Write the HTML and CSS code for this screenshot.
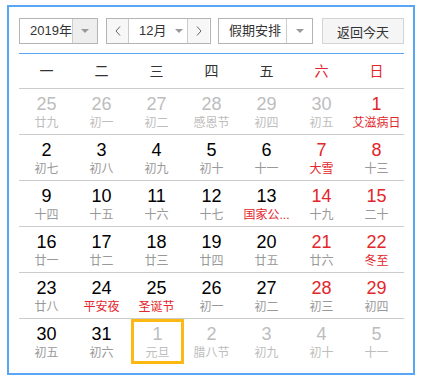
FILE: index.html
```html
<!DOCTYPE html>
<html>
  <head>
    <title>万年历</title>
    <link rel="stylesheet" href="styles.css">
  </head>
  <body>
    <div class="calendar">
      <div class="toolbar">
        <div class="select year-select">
          <span class="select-text">2019年</span>
          <span class="select-arrow gray"><i class="caret"></i></span>
        </div>

        <div class="month-group">
          <span class="nav-btn">
            <svg width="6" height="10" viewBox="0 0 6 10"><polyline points="5,0.5 1,5 5,9.5" fill="none" stroke="#666" stroke-width="1"/></svg>
          </span>
          <span class="month-text">12月 <i class="caret"></i></span>
          <span class="nav-btn">
            <svg width="6" height="10" viewBox="0 0 6 10"><polyline points="1,0.5 5,5 1,9.5" fill="none" stroke="#666" stroke-width="1"/></svg>
          </span>
        </div>

        <div class="select holiday-select">
          <span class="select-text">假期安排</span>
          <span class="select-arrow"><i class="caret"></i></span>
        </div>

        <button class="today-btn">返回今天</button>
      </div>

      <div class="weekdays">
        <span>一</span><span>二</span><span>三</span><span>四</span><span>五</span>
        <span class="weekend">六</span><span class="weekend">日</span>
      </div>

      <!-- rows of days, other = not in this month -->
      <div class="week">
        <div class="day other"><b>25</b><em>廿九</em></div>
        <div class="day other"><b>26</b><em>初一</em></div>
        <div class="day other"><b>27</b><em>初二</em></div>
        <div class="day other"><b>28</b><em>感恩节</em></div>
        <div class="day other"><b>29</b><em>初四</em></div>
        <div class="day other"><b>30</b><em>初五</em></div>
        <div class="day weekend"><b>1</b><em class="fest">艾滋病日</em></div>
      </div>
      <div class="week">
        <div class="day"><b>2</b><em>初七</em></div>
        <div class="day"><b>3</b><em>初八</em></div>
        <div class="day"><b>4</b><em>初九</em></div>
        <div class="day"><b>5</b><em>初十</em></div>
        <div class="day"><b>6</b><em>十一</em></div>
        <div class="day weekend"><b>7</b><em class="fest">大雪</em></div>
        <div class="day weekend"><b>8</b><em>十三</em></div>
      </div>
      <div class="week">
        <div class="day"><b>9</b><em>十四</em></div>
        <div class="day"><b>10</b><em>十五</em></div>
        <div class="day"><b>11</b><em>十六</em></div>
        <div class="day"><b>12</b><em>十七</em></div>
        <div class="day"><b>13</b><em class="fest">国家公...</em></div>
        <div class="day weekend"><b>14</b><em>十九</em></div>
        <div class="day weekend"><b>15</b><em>二十</em></div>
      </div>
      <div class="week">
        <div class="day"><b>16</b><em>廿一</em></div>
        <div class="day"><b>17</b><em>廿二</em></div>
        <div class="day"><b>18</b><em>廿三</em></div>
        <div class="day"><b>19</b><em>廿四</em></div>
        <div class="day"><b>20</b><em>廿五</em></div>
        <div class="day weekend"><b>21</b><em>廿六</em></div>
        <div class="day weekend"><b>22</b><em class="fest">冬至</em></div>
      </div>
      <div class="week">
        <div class="day"><b>23</b><em>廿八</em></div>
        <div class="day"><b>24</b><em class="fest">平安夜</em></div>
        <div class="day"><b>25</b><em class="fest">圣诞节</em></div>
        <div class="day"><b>26</b><em>初一</em></div>
        <div class="day"><b>27</b><em>初二</em></div>
        <div class="day weekend"><b>28</b><em>初三</em></div>
        <div class="day weekend"><b>29</b><em>初四</em></div>
      </div>
      <div class="week last">
        <div class="day"><b>30</b><em>初五</em></div>
        <div class="day"><b>31</b><em>初六</em></div>
        <div class="day other today"><b>1</b><em>元旦</em></div>
        <div class="day other"><b>2</b><em>腊八节</em></div>
        <div class="day other"><b>3</b><em>初九</em></div>
        <div class="day other"><b>4</b><em>初十</em></div>
        <div class="day other"><b>5</b><em>十一</em></div>
      </div>
    </div>
  </body>
</html>
```

FILE: styles.css
```css
body {
  margin: 0;
  font-family: "Liberation Sans", "Noto Sans CJK SC", sans-serif;
  background: #fff;
}

.calendar {
  width: 408px;
  box-sizing: border-box;
  margin: 5px 7px;
  padding: 11px 9px 9px 10px;
  border: 2px solid #5aa6f6;
}

.toolbar {
  display: flex;
  height: 26px;
  margin-bottom: 9px;
}

.select,
.month-group {
  display: flex;
  box-sizing: border-box;
  height: 26px;
  border: 1px solid #b4b4b4;
  background: #fff;
  font-size: 13px;
  color: #333;
}

.select-text {
  flex: 1;
  padding-left: 10px;
  line-height: 24px;
}

.select-arrow {
  display: flex;
  align-items: center;
  justify-content: center;
  width: 24px;
  border-left: 1px solid #ccc;
}

.select-arrow.gray {
  background: #eee;
}

.caret {
  display: inline-block;
  width: 0;
  height: 0;
  border-left: 4px solid transparent;
  border-right: 4px solid transparent;
  border-top: 4px solid #999;
  vertical-align: middle;
}

.year-select {
  width: 79px;
}

.month-group {
  width: 105px;
  margin-left: 8px;
}

.nav-btn {
  display: flex;
  align-items: center;
  justify-content: center;
  width: 21px;
  background: #f7f7f7;
}

.month-text {
  width: 60px;
  box-sizing: border-box;
  padding-left: 10px;
  line-height: 24px;
  border-left: 1px solid #ccc;
  border-right: 1px solid #ccc;
}

.month-text .caret {
  margin-left: 5px;
  margin-top: -2px;
}

.holiday-select {
  width: 95px;
  margin-left: 7px;
}

.holiday-select .select-arrow {
  width: 25px;
}

.today-btn {
  width: 82px;
  height: 26px;
  margin-left: 9px;
  padding: 0;
  border: 1px solid #d4d4d4;
  background: #f5f5f5;
  font-family: "Liberation Sans", "Noto Sans CJK SC", sans-serif;
  font-size: 13px;
  color: #333;
}

.weekdays {
  display: grid;
  grid-template-columns: repeat(7, 55px);
  height: 34px;
  border-top: 1px solid #5aa6f6;
  border-bottom: 1px solid #ccc;
  font-size: 14px;
  line-height: 34px;
  text-align: center;
  color: #333;
}

.weekdays .weekend {
  color: #e3262b;
}

.week {
  display: grid;
  grid-template-columns: repeat(7, 55px);
  height: 45px;
  border-bottom: 1px solid #ccc;
}

.week.last {
  border-bottom: 0;
}

.day {
  display: flex;
  flex-direction: column;
  align-items: center;
  padding-top: 5px;
  box-sizing: border-box;
}

.day b {
  font-weight: normal;
  font-size: 18px;
  line-height: 20px;
  color: #000;
}

.day em {
  font-style: normal;
  font-size: 12px;
  line-height: 16px;
  margin-top: 1px;
  color: #999;
  white-space: nowrap;
}

.day.weekend b,
.day em.fest {
  color: #e3262b;
}

.day.other b,
.day.other em {
  color: #bdbdbd;
}

.day.today {
  margin-left: 2px;
  padding-top: 2px;
  border: 3px solid #fdb913;
}
```
